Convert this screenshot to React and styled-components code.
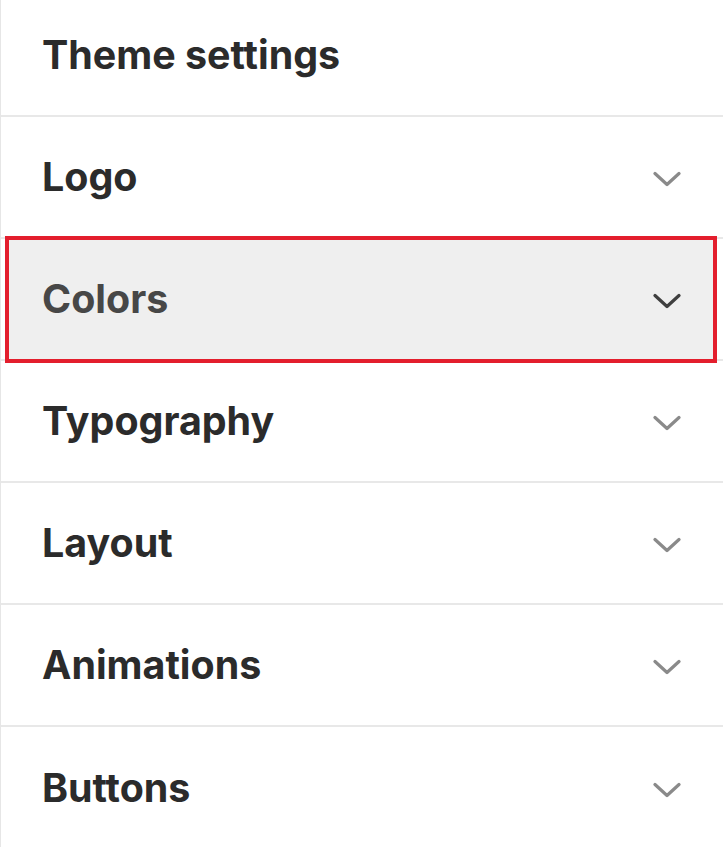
import React from "react";
import styled, { createGlobalStyle } from "styled-components";

const GlobalStyle = createGlobalStyle`
  html, body {
    margin: 0;
    padding: 0;
    background: #ffffff;
  }
  body {
    font-family: Inter, "Noto Sans", "Liberation Sans", sans-serif;
  }
`;

const Panel = styled.aside`
  width: 722px;
  min-height: 847px;
  border-left: 1px solid #e6e6e6;
  background: #fff;
  display: flex;
  flex-direction: column;
`;

const Header = styled.div`
  height: 117px;
  display: flex;
  align-items: center;
  padding: 0 41px 6px;
  border-bottom: 2px solid #e8e8e8;
  box-sizing: border-box;
`;

const Title = styled.h2`
  margin: 0;
  font-size: 39.4px;
  font-weight: 700;
  color: #2b2b2b;
`;

const Row = styled.button`
  position: relative;
  height: 122px;
  width: 100%;
  display: flex;
  align-items: center;
  justify-content: space-between;
  padding: 0 41px;
  box-sizing: border-box;
  border: none;
  border-bottom: 2px solid #e8e8e8;
  background: transparent;
  font-family: inherit;
  cursor: pointer;
  color: ${(p) => (p.$active ? "#474747" : "#2b2b2b")};

  &:last-child {
    border-bottom: none;
  }

  ${(p) =>
    p.$active &&
    `
    &::before {
      content: "";
      position: absolute;
      left: 4px;
      right: 6px;
      top: -3px;
      bottom: -4px;
      background: #efefef;
      border: 4px solid #e31e2d;
      z-index: 0;
    }
  `}
`;

const Label = styled.span`
  position: relative;
  z-index: 1;
  font-size: 39.4px;
  font-weight: 700;
`;

const Chevron = styled.svg`
  position: relative;
  z-index: 1;
  top: 2px;
  width: 28px;
  height: 16px;
  margin-right: 1px;
  stroke: ${(p) => (p.$active ? "#3f3f3f" : "#8a8a8a")};
`;

const sections = ["Logo", "Colors", "Typography", "Layout", "Animations", "Buttons"];

export default function App() {
  return (
    <>
      <GlobalStyle />
      <Panel>
        <Header>
          <Title>Theme settings</Title>
        </Header>
        {sections.map((name) => {
          const active = name === "Colors";
          return (
            <Row key={name} $active={active}>
              <Label>{name}</Label>
              <Chevron $active={active} viewBox="0 0 28 16" fill="none">
                <path
                  d="M2 2.5 L14 13.5 L26 2.5"
                  strokeWidth="3.2"
                  strokeLinecap="round"
                  strokeLinejoin="round"
                />
              </Chevron>
            </Row>
          );
        })}
      </Panel>
    </>
  );
}
